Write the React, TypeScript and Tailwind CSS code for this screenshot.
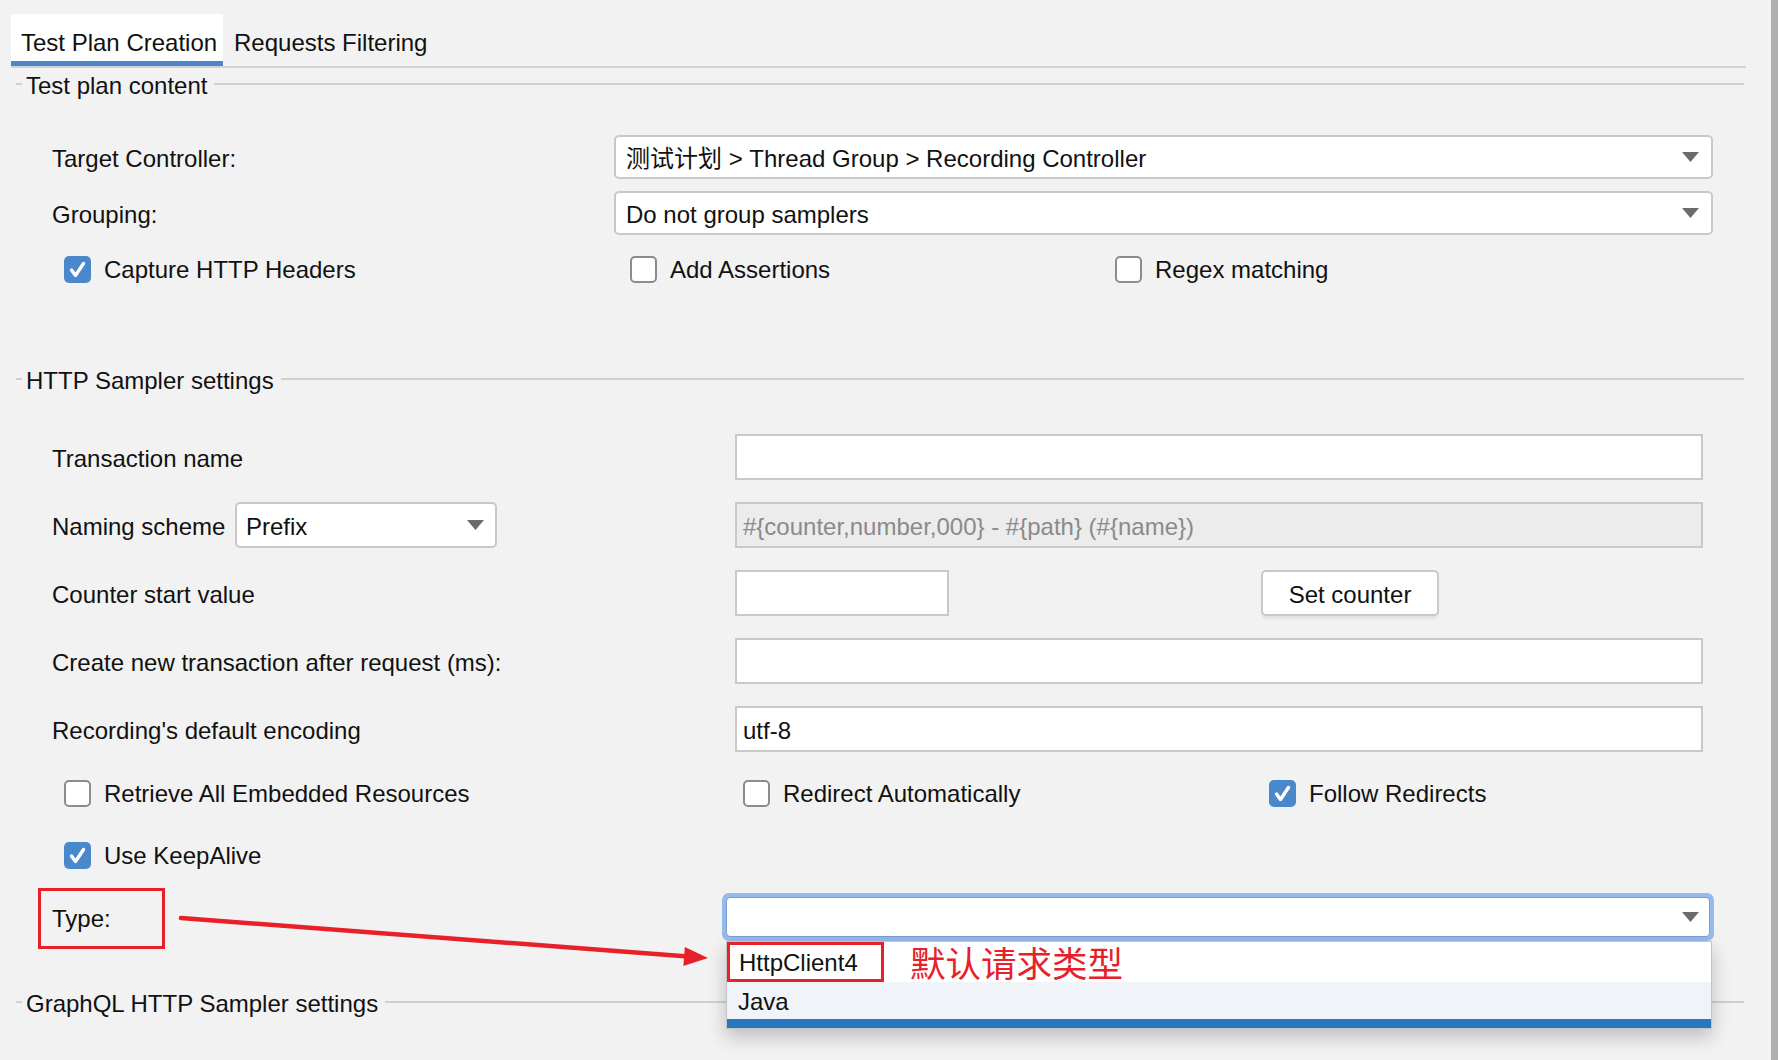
import React from "react";

function Caret() {
  return (
    <svg width="17" height="10" viewBox="0 0 17 10">
      <polygon points="0,0 17,0 8.5,10" fill="#6b6b6b" />
    </svg>
  );
}

function Checkbox({ checked, label }: { checked?: boolean; label: string }) {
  return (
    <div className="flex items-center">
      {checked ? (
        <div className="w-[27px] h-[27px] rounded-[5px] bg-[#4a88cc] flex items-center justify-center">
          <svg width="27" height="27" viewBox="0 0 27 27">
            <path d="M7.5 14 L11.5 19.5 L19.5 7.5" fill="none" stroke="white" strokeWidth="3.4" strokeLinecap="round" strokeLinejoin="round" />
          </svg>
        </div>
      ) : (
        <div className="w-[27px] h-[27px] rounded-[5px] bg-white border-2 border-[#8c8c8c]" />
      )}
      <span className="ml-[13px] pt-[1px]">{label}</span>
    </div>
  );
}

function GroupHeader({ title }: { title: string }) {
  return (
    <div className="flex items-center h-[32px] mr-[27px]">
      <div className="ml-[16px] w-[6px] h-[2px] bg-[#d0d0d0]" />
      <span className="ml-[4px] leading-none pt-[3px]">{title}</span>
      <div className="flex-1 h-[2px] bg-[#d0d0d0] ml-[7px]" />
    </div>
  );
}

function Dropdown({ text }: { text: string }) {
  return (
    <div className="w-[1099px] h-full bg-white border-2 border-[#c8c8c8] rounded-[5px] flex items-center justify-between pl-[10px] pr-[12px]">
      <span className="pt-[3px]">{text}</span>
      <Caret />
    </div>
  );
}

function Field({ w, text, disabled }: { w: string; text?: string; disabled?: boolean }) {
  return (
    <div
      className={`${w} h-full border-2 border-[#c9c9c9] flex items-center pl-[6px] pt-[3px] ${
        disabled ? "bg-[#ececec] text-[#8a8a8a]" : "bg-white"
      }`}
    >
      {text}
    </div>
  );
}

export default function App() {
  return (
    <div className="w-[1778px] h-[1060px] bg-[#f2f2f2] flex overflow-hidden relative text-[24px] text-[#111] font-['Liberation_Sans','Noto_Sans_CJK_SC',sans-serif]">
      <div className="flex-1 flex flex-col relative">
        {/* Tabs */}
        <div className="mt-[14px] ml-[11px] flex h-[52px]">
          <div className="w-[212px] h-full bg-white border-b-[5px] border-[#4a86c8] flex items-center pl-[10px] pt-[10px]">
            Test Plan Creation
          </div>
          <div className="ml-[11px] h-full flex items-center pt-[5px]">Requests Filtering</div>
        </div>
        <div className="ml-[11px] mr-[25px] h-[2px] bg-[#d2d2d2]" />

        <GroupHeader title="Test plan content" />

        <div className="mt-[35px] flex items-center h-[44px]">
          <div className="w-[614px] pl-[52px] pt-[3px]">Target Controller:</div>
          <Dropdown text="测试计划 > Thread Group > Recording Controller" />
        </div>
        <div className="mt-[12px] flex items-center h-[44px]">
          <div className="w-[614px] pl-[52px] pt-[3px]">Grouping:</div>
          <Dropdown text="Do not group samplers" />
        </div>
        <div className="mt-[21px] flex items-center h-[27px] pl-[64px]">
          <div className="w-[566px]">
            <Checkbox checked label="Capture HTTP Headers" />
          </div>
          <div className="w-[485px]">
            <Checkbox label="Add Assertions" />
          </div>
          <Checkbox label="Regex matching" />
        </div>

        <div className="mt-[80px]">
          <GroupHeader title="HTTP Sampler settings" />
        </div>

        <div className="mt-[39px] flex items-center h-[46px]">
          <div className="w-[735px] pl-[52px] pt-[3px]">Transaction name</div>
          <Field w="w-[968px]" />
        </div>
        <div className="mt-[22px] flex items-center h-[46px]">
          <div className="w-[235px] pl-[52px] pt-[3px]">Naming scheme</div>
          <div className="w-[262px] h-full bg-white border-2 border-[#c8c8c8] rounded-[5px] flex items-center justify-between pl-[9px] pr-[11px]">
            <span className="pt-[3px]">Prefix</span>
            <Caret />
          </div>
          <div className="ml-[238px] h-full">
            <Field w="w-[968px]" text="#{counter,number,000} - #{path} (#{name})" disabled />
          </div>
        </div>
        <div className="mt-[22px] flex items-center h-[46px]">
          <div className="w-[735px] pl-[52px] pt-[3px]">Counter start value</div>
          <Field w="w-[214px]" />
          <div className="ml-[312px] w-[178px] h-full bg-white border-2 border-[#c8c8c8] rounded-[5px] shadow-[0_3px_2px_rgba(0,0,0,0.06)] flex items-center justify-center pt-[3px]">
            Set counter
          </div>
        </div>
        <div className="mt-[22px] flex items-center h-[46px]">
          <div className="w-[735px] pl-[52px] pt-[3px]">Create new transaction after request (ms):</div>
          <Field w="w-[968px]" />
        </div>
        <div className="mt-[22px] flex items-center h-[46px]">
          <div className="w-[735px] pl-[52px] pt-[3px]">Recording's default encoding</div>
          <Field w="w-[968px]" text="utf-8" />
        </div>

        <div className="mt-[28px] flex items-center h-[27px] pl-[64px]">
          <div className="w-[679px]">
            <Checkbox label="Retrieve All Embedded Resources" />
          </div>
          <div className="w-[526px]">
            <Checkbox label="Redirect Automatically" />
          </div>
          <Checkbox checked label="Follow Redirects" />
        </div>
        <div className="mt-[35px] flex items-center h-[27px] pl-[64px]">
          <Checkbox checked label="Use KeepAlive" />
        </div>

        <div className="mt-[24px] flex items-center h-[48px]">
          <div className="w-[722px] pl-[52px] pt-[3px]">Type:</div>
          <div className="relative w-[992px] h-full">
            <div className="w-full h-full rounded-[7px] bg-[#93bbee] p-[4px]">
              <div className="w-full h-full rounded-[4px] bg-white border border-[#7d9dca] flex items-center justify-end pr-[10px]">
                <Caret />
              </div>
            </div>
            {/* Popup list */}
            <div className="absolute top-full left-[4px] right-[2px] z-10 bg-white border border-[#c4c4c4] shadow-[0_8px_18px_rgba(0,0,0,0.22)] flex flex-col">
              <div className="h-[40px] flex items-center bg-white">
                <div className="h-[40px] w-[157px] border-[3px] border-[#e8202a] flex items-center pl-[9px] pt-[2px]">HttpClient4</div>
                <span className="ml-[26px] text-[35.5px] leading-none text-[#e8202a] font-['Noto_Sans_CJK_SC',sans-serif]">默认请求类型</span>
              </div>
              <div className="h-[37px] flex items-center bg-[#f0f4f9] pl-[11px] pt-[2px]">Java</div>
              <div className="h-[9px] bg-[#2a77bf]" />
            </div>
          </div>
        </div>

        <div className="mt-[45px]">
          <GroupHeader title="GraphQL HTTP Sampler settings" />
        </div>

        {/* Annotation: box around Type label */}
        <div className="absolute left-[38px] top-[888px] w-[127px] h-[61px] border-[3px] border-[#e8202a] pointer-events-none" />
        {/* Annotation arrow */}
        <svg className="absolute left-0 top-0 pointer-events-none z-20" width="1771" height="1060" viewBox="0 0 1771 1060">
          <line x1="181" y1="918" x2="688" y2="956.5" stroke="#e8202a" strokeWidth="4.5" strokeLinecap="round" />
          <polygon points="708,958 684.8,947 683.4,966" fill="#e8202a" />
        </svg>
      </div>
      <div className="w-[7px] h-full bg-[#b0b0b0]" />
    </div>
  );
}
